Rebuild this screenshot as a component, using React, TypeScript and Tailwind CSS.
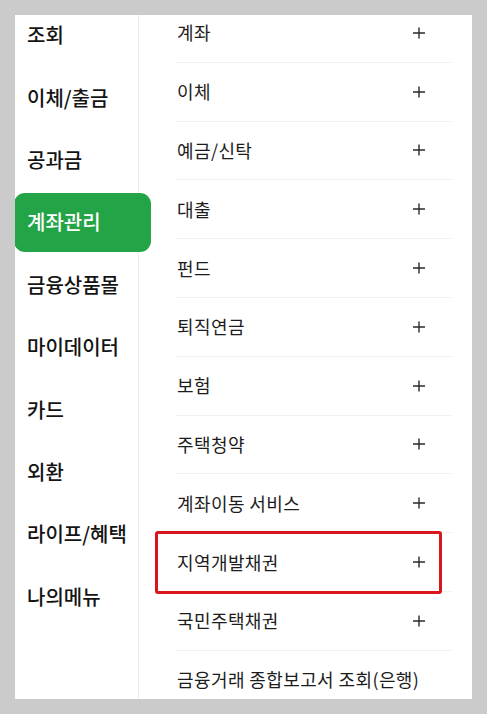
import React from "react";

const left = ["조회", "이체/출금", "공과금", "계좌관리", "금융상품몰", "마이데이터", "카드", "외환", "라이프/혜택", "나의메뉴"];
const right = [
  "계좌",
  "이체",
  "예금/신탁",
  "대출",
  "펀드",
  "퇴직연금",
  "보험",
  "주택청약",
  "계좌이동 서비스",
  "지역개발채권",
  "국민주택채권",
  "금융거래 종합보고서 조회(은행)",
];

function Plus() {
  return (
    <svg width="14" height="14" viewBox="0 0 14 14" className="shrink-0">
      <path d="M7 1.5V12.5M1 7H13" stroke="#2a2a2a" strokeWidth="1.4" />
    </svg>
  );
}

export default function App() {
  return (
    <div
      className="w-[487px] h-[714px] bg-[#cbcbcb] p-[15px] overflow-hidden"
      style={{ fontFamily: '"Noto Sans CJK KR", "Noto Sans", sans-serif' }}
    >
      <div className="w-[457px] h-[684px] bg-white flex overflow-hidden">
        <div className="relative z-10 w-[124px] shrink-0 border-r border-[#ececec] flex flex-col mt-[-11px]">
          {left.map((t, i) => (
            <div key={t} className="h-[62.4px] shrink-0 flex items-center">
              {i === 3 ? (
                <div className="shrink-0 ml-[-1px] w-[137px] h-[59px] rounded-[11px] bg-[#22a447] flex items-center pl-[13px] text-white text-[20px] font-medium">
                  {t}
                </div>
              ) : (
                <div className="shrink-0 pl-[12px] text-[20px] font-medium text-[#141414]">{t}</div>
              )}
            </div>
          ))}
        </div>
        <div className="flex-1 flex flex-col pl-[37px] pr-[20px] mt-[-11px]">
          {right.map((t, i) => (
            <div
              key={t}
              className="relative h-[58.8px] shrink-0 flex items-center justify-between border-b-[1.5px] border-[#f1f1f1] pr-[26px]"
            >
              <span className="pl-[1px] text-[18px] text-[#1c1c1c] tracking-[0.4px]">{t}</span>
              {i < 11 && <Plus />}
              {i === 9 && (
                <div className="absolute left-[-21px] right-[10px] top-[-2px] bottom-[-3px] border-[3px] border-[#d8161c] rounded-[3px]" />
              )}
            </div>
          ))}
        </div>
      </div>
    </div>
  );
}
